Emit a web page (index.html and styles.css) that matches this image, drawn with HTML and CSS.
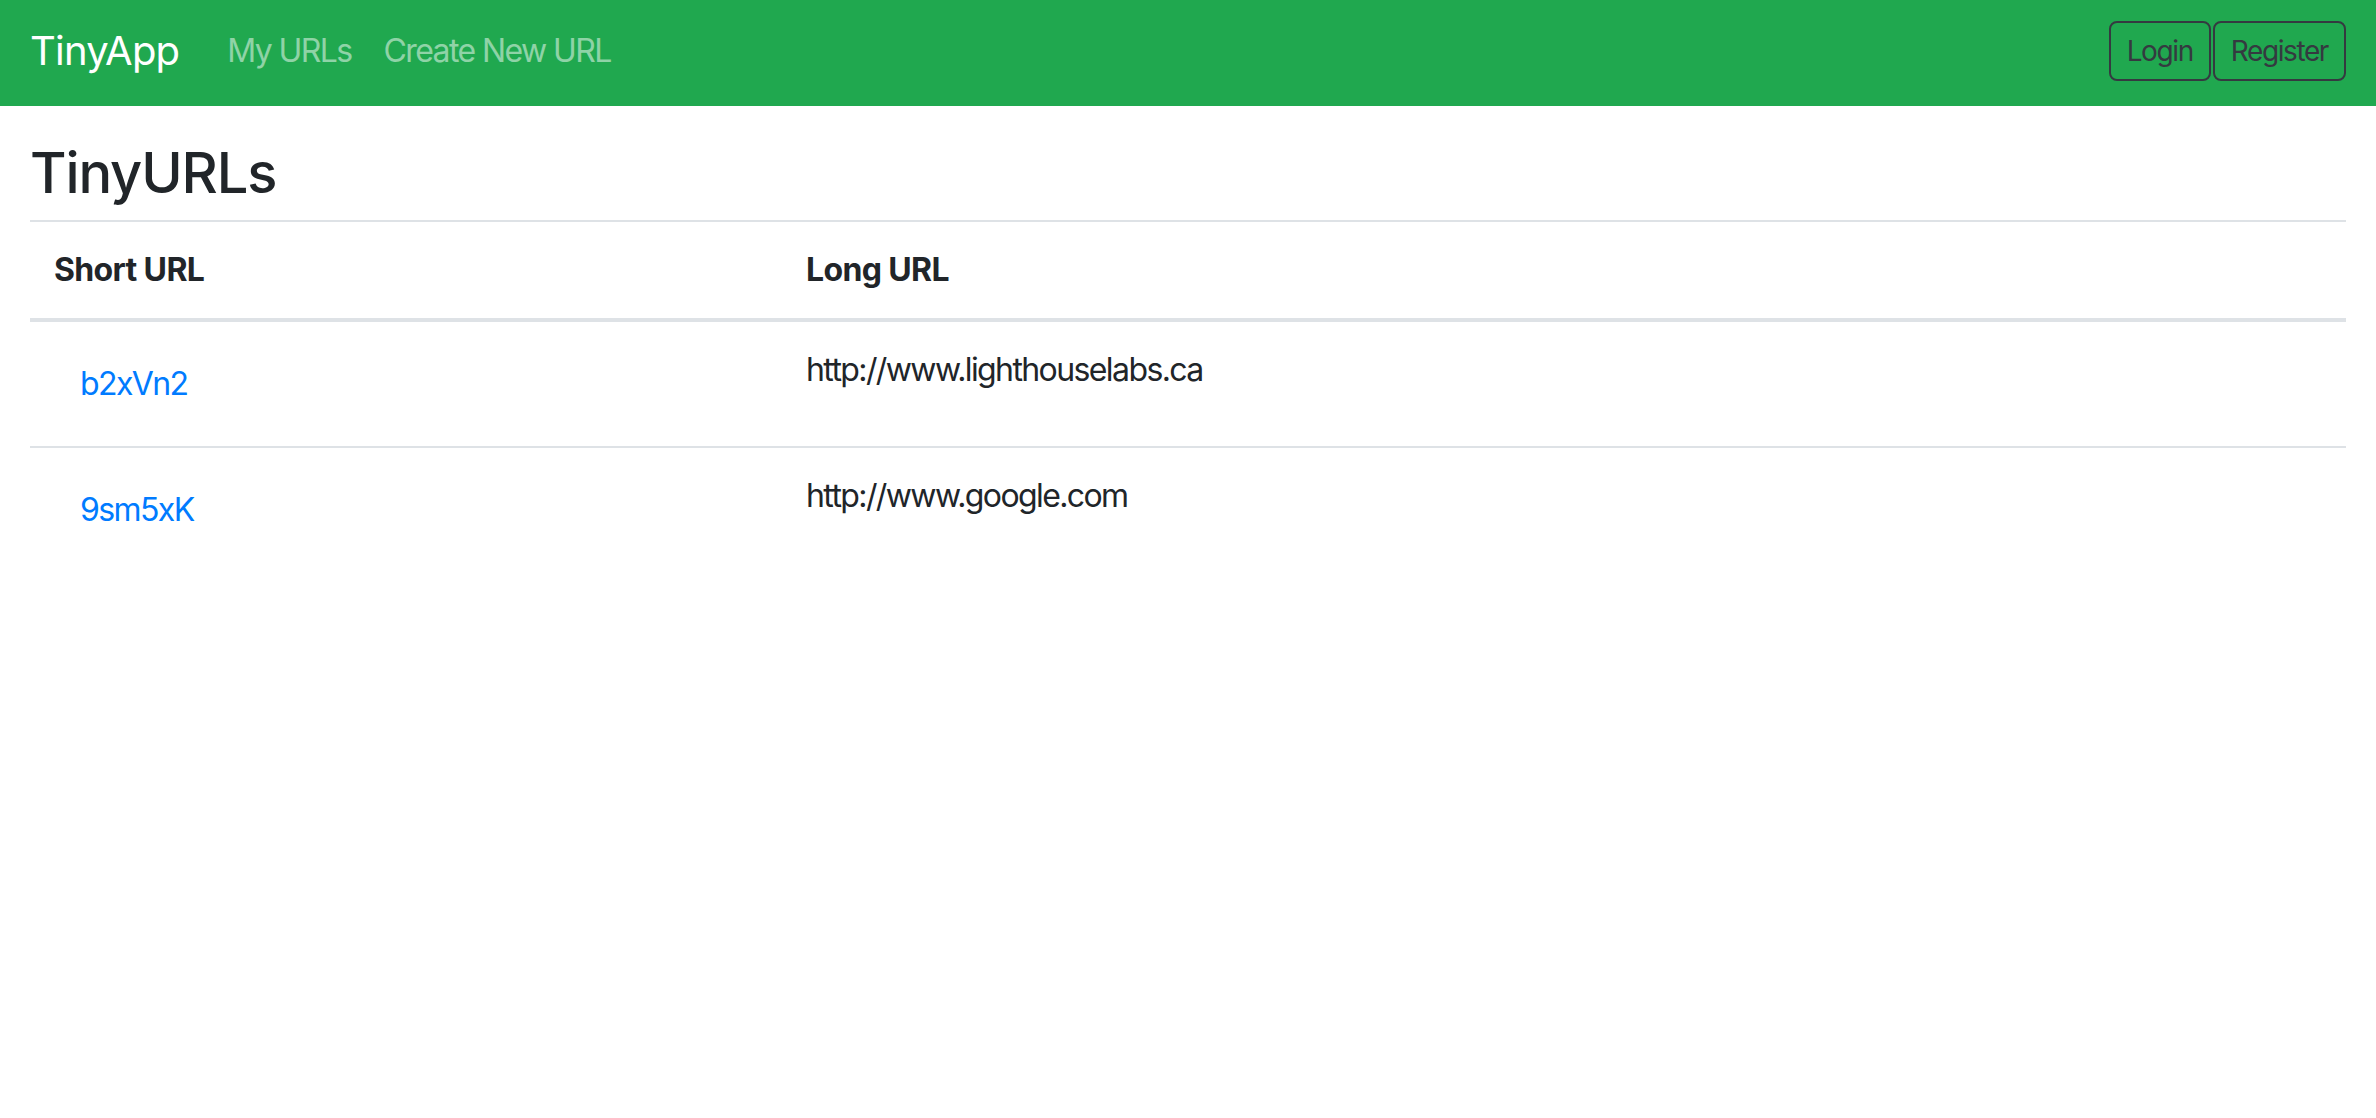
FILE: index.html
```html
<!DOCTYPE html>
<html lang="en">
<head>
<meta charset="utf-8">
<title>TinyApp</title>
<link rel="stylesheet" href="styles.css">
</head>
<body>
<nav class="navbar">
  <a class="brand" href="#">TinyApp</a>
  <div class="nav-links">
    <a class="nav-link" href="#">My URLs</a>
    <a class="nav-link" href="#">Create New URL</a>
  </div>
  <div class="auth">
    <button class="btn-outline">Login</button>
    <button class="btn-outline">Register</button>
  </div>
</nav>
<main class="container">
  <h3 class="title">TinyURLs</h3>
  <table class="table">
    <thead>
      <tr>
        <th class="col-short">Short URL</th>
        <th>Long URL</th>
      </tr>
    </thead>
    <tbody>
      <tr>
        <td><a class="btn-link" href="#">b2xVn2</a></td>
        <td>http://www.lighthouselabs.ca</td>
      </tr>
      <tr>
        <td><a class="btn-link" href="#">9sm5xK</a></td>
        <td>http://www.google.com</td>
      </tr>
    </tbody>
  </table>
</main>
</body>
</html>
```

FILE: styles.css
```css
* { box-sizing: border-box; }

html, body {
  margin: 0;
  padding: 0;
  background: #ffffff;
}

body {
  font-family: Inter, "Liberation Sans", Arial, sans-serif;
  font-size: 32px;
  line-height: 48px;
  letter-spacing: -0.05em;
  color: #212529;
}

.navbar {
  display: flex;
  align-items: center;
  height: 106px;
  padding: 0 30px 4px 30px;
  background: #20a84f;
}

.brand {
  font-size: 40px;
  line-height: 60px;
  letter-spacing: -0.02em;
  color: #ffffff;
  text-decoration: none;
  margin-right: 32px;
}

.nav-links {
  display: flex;
  flex: 1;
}

.nav-link {
  font-size: 32px;
  line-height: 48px;
  padding: 0 16px;
  color: rgba(255, 255, 255, 0.5);
  text-decoration: none;
}

.auth {
  display: flex;
  gap: 2px;
}

.btn-outline {
  font-family: inherit;
  font-size: 28px;
  line-height: 42px;
  letter-spacing: -0.05em;
  padding: 7px 16px;
  color: #343a40;
  background: transparent;
  border: 2px solid #343a40;
  border-radius: 8px;
}

.container {
  padding: 0 30px;
}

.title {
  font-size: 56px;
  line-height: 67px;
  font-weight: 500;
  letter-spacing: -0.02em;
  margin: 34px 0 13px 0;
}

.table {
  width: 100%;
  border-collapse: collapse;
}

.table th,
.table td {
  text-align: left;
  vertical-align: top;
  padding: 24px;
  border-top: 2px solid #dee2e6;
}

.table th {
  font-weight: 700;
  letter-spacing: -0.02em;
}

.table thead th {
  border-bottom: 4px solid #dee2e6;
}

.col-short {
  width: 752px;
}

.btn-link {
  display: inline-block;
  padding: 12px 24px;
  border: 2px solid transparent;
  color: #007bff;
  text-decoration: none;
}
```
